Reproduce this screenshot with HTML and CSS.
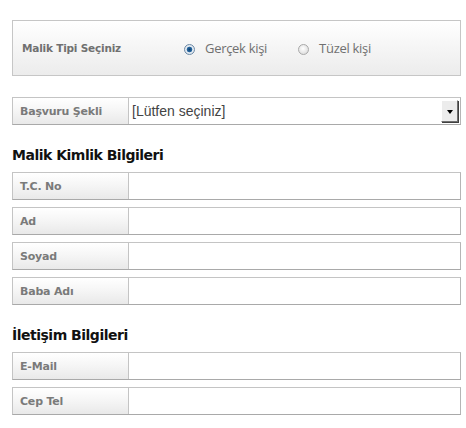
FILE: index.html
```html
<!DOCTYPE html>
<html lang="tr">
<head>
<meta charset="utf-8">
<link rel="stylesheet" href="styles.css">
</head>
<body>
<div class="page">
  <div class="type-panel">
    <span class="type-label">Malik Tipi Seçiniz</span>
    <span class="radios">
      <span class="radio-item"><span class="radio checked"></span>Gerçek kişi</span>
      <span class="radio-item"><span class="radio"></span>Tüzel kişi</span>
    </span>
  </div>

  <div class="row select-row">
    <div class="cell-label">Başvuru Şekli</div>
    <div class="select">
      <span class="select-text">[Lütfen seçiniz]</span>
      <span class="select-btn"><span class="tri"></span></span>
    </div>
  </div>

  <h2 class="section-title">Malik Kimlik Bilgileri</h2>
  <div class="rows">
    <div class="row"><div class="cell-label">T.C. No</div><div class="cell-input"></div></div>
    <div class="row"><div class="cell-label">Ad</div><div class="cell-input"></div></div>
    <div class="row"><div class="cell-label">Soyad</div><div class="cell-input"></div></div>
    <div class="row"><div class="cell-label">Baba Adı</div><div class="cell-input"></div></div>
  </div>

  <h2 class="section-title second">İletişim Bilgileri</h2>
  <div class="rows">
    <div class="row"><div class="cell-label">E-Mail</div><div class="cell-input"></div></div>
    <div class="row"><div class="cell-label">Cep Tel</div><div class="cell-input"></div></div>
  </div>
</div>
</body>
</html>
```

FILE: styles.css
```css
html, body {
  margin: 0;
  padding: 0;
  background: #fff;
}
.page {
  padding: 20px 0 0 12px;
  width: 449px;
  font-family: "DejaVu Sans", Verdana, sans-serif;
}
.type-panel {
  height: 54px;
  border: 1px solid #c6c6c6;
  background: linear-gradient(#ffffff, #f6f6f6 45%, #ececec);
  display: flex;
  align-items: center;
  padding-left: 9px;
}
.type-label {
  width: 162px;
  font-size: 10.5px;
  font-weight: bold;
  color: #707070;
  letter-spacing: -0.2px;
}
.radios {
  display: flex;
  gap: 31px;
  font-family: "Open Sans", "DejaVu Sans", sans-serif;
  font-size: 13px;
  color: #707070;
  letter-spacing: -0.3px;
}
.radio-item {
  display: flex;
  align-items: center;
}
.radio {
  width: 9px;
  height: 9px;
  border-radius: 50%;
  border: 1px solid #a9a9a9;
  background: radial-gradient(circle at 45% 40%, #ffffff, #d4d4d4);
  margin-right: 10px;
  position: relative;
  top: 1px;
}
.radio.checked {
  border-color: #6d8aa6;
  background: radial-gradient(circle, #0c3d6e 0, #2a6aa2 2.5px, #e8eef5 3.2px, #d0d8e0 100%);
}
.row {
  display: flex;
  height: 26px;
  border: 1px solid #c4c4c4;
  border-bottom-color: #a9a9a9;
  border-right-color: #b5b5b5;
}
.select-row {
  margin-top: 21px;
}
.cell-label {
  width: 108px;
  flex: none;
  padding-left: 7px;
  border-right: 1px solid #c4c4c4;
  background: linear-gradient(#ffffff, #f5f5f5 50%, #e9e9e9);
  display: flex;
  align-items: center;
  font-size: 11px;
  font-weight: bold;
  color: #7a7a7a;
  letter-spacing: -0.2px;
}
.cell-input {
  flex: 1;
  background: #fff;
}
.select {
  flex: 1;
  display: flex;
  align-items: center;
  background: #fff;
  padding-left: 3px;
}
.select-text {
  flex: 1;
  font-family: "Liberation Sans", Arial, sans-serif;
  font-size: 14px;
  color: #444;
}
.select-btn {
  width: 15px;
  height: 20px;
  margin-right: 2px;
  background: #ececec;
  border-top: 1px solid #fff;
  border-left: 1px solid #fff;
  border-right: 1px solid #707070;
  border-bottom: 1px solid #707070;
  box-shadow: 1px 1px 0 #404040;
  display: flex;
  align-items: center;
  justify-content: center;
}
.tri {
  width: 0;
  height: 0;
  border-left: 3.5px solid transparent;
  border-right: 3.5px solid transparent;
  border-top: 4px solid #000;
  margin-top: 1px;
}
.section-title {
  margin: 22px 0 8px 0;
  font-size: 14px;
  font-weight: bold;
  color: #111;
  line-height: 17px;
  letter-spacing: -0.5px;
}
.section-title.second {
  margin-top: 22px;
}
.rows {
  display: flex;
  flex-direction: column;
  gap: 7px;
}
```
